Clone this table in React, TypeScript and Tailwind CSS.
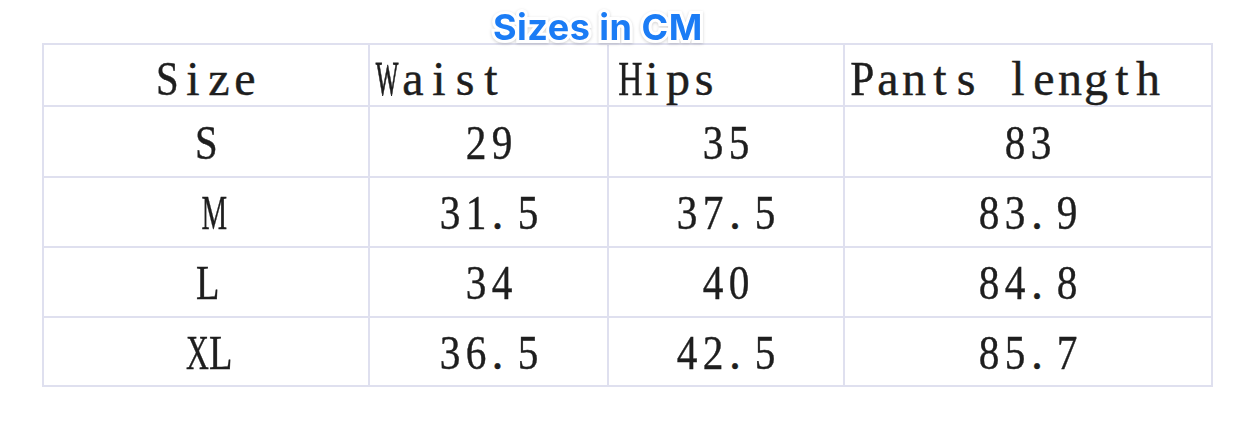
import React from "react";

const header = ["Size", "Waist", "Hips", "Pants length"];
const rows = [
  ["S", "29", "35", "83"],
  ["M", "31.5", "37.5", "83.9"],
  ["L", "34", "40", "84.8"],
  ["XL", "36.5", "42.5", "85.7"],
];

const scaleClass: Record<string, string> = {
  S: "scale-x-[0.85]",
  W: "text-[24px] leading-none scale-y-[2] origin-[50%_84%]",
  H: "scale-x-[0.7]",
  P: "scale-x-[0.9]",
  M: "scale-x-[0.6]",
  L: "scale-x-[0.8]",
  X: "scale-x-[0.66]",
  ".": "scale-x-100",
};

function Mono({ text }: { text: string }) {
  return (
    <span className="inline-flex">
      {text.split("").map((ch, i) => {
        const sc = /[0-9]/.test(ch)
          ? "scale-x-[0.86]"
          : scaleClass[ch] ?? "scale-x-100";
        return (
          <span
            key={i}
            className={
              ch === "."
                ? "inline-block w-[26px] text-left pl-[3px]"
                : "inline-block w-[26px] text-center"
            }
          >
            <span className={"inline-block " + sc}>
              {ch === " " ? "\u00a0" : ch}
            </span>
          </span>
        );
      })}
    </span>
  );
}

export default function App() {
  return (
    <div className="w-[1258px] h-[428px] bg-white overflow-hidden">
      <div className="h-[43px] pl-[493px] pt-[9px]">
        <span
          className="block w-max text-[36px] leading-[36px] font-bold tracking-[0.5px] text-[#1b7cf5] [paint-order:stroke_fill] [-webkit-text-stroke:6px_white] [filter:drop-shadow(0_1px_1.5px_rgba(0,0,0,0.18))]"
          style={{ fontFamily: "Inter, 'Noto Sans', sans-serif" }}
        >
          Sizes in CM
        </span>
      </div>
      <div
        className="ml-[42px] w-max grid grid-cols-[324px_237px_234px_366px] grid-rows-[60px_69px_68px_68px_67px] gap-[2px] p-[2px] bg-[#dfe0ef] text-[#1e1e1e] text-[48px] [-webkit-text-stroke:0.4px_#1e1e1e]"
        style={{ fontFamily: "'Liberation Serif', 'Noto Serif CJK SC', serif" }}
      >
        {header.map((h, i) => (
          <div
            key={h}
            className={
              i === 0
                ? "bg-white flex items-center justify-center pt-[8px] leading-none"
                : "bg-white flex items-center justify-start pl-[4px] pt-[8px] leading-none"
            }
          >
            <Mono text={h} />
          </div>
        ))}
        {rows.map((r) =>
          r.map((c, j) => (
            <div
              key={r[0] + j}
              className="bg-white flex items-center justify-center leading-none pt-[2px]"
            >
              <Mono text={c} />
            </div>
          ))
        )}
      </div>
    </div>
  );
}
